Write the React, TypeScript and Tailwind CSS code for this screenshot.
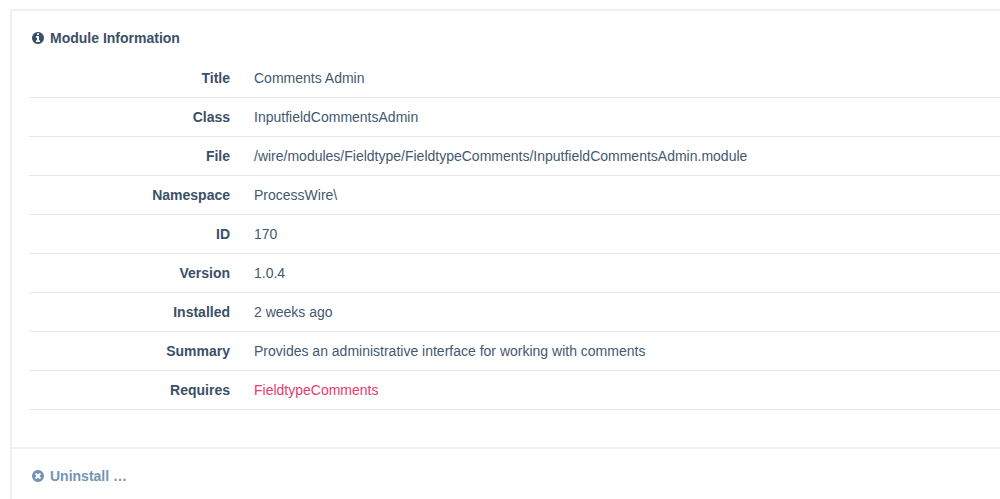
import type { ReactNode } from "react";

interface InfoRow {
  label: string;
  value: ReactNode;
}

const rows: InfoRow[] = [
  { label: "Title", value: "Comments Admin" },
  { label: "Class", value: "InputfieldCommentsAdmin" },
  {
    label: "File",
    value: "/wire/modules/Fieldtype/FieldtypeComments/InputfieldCommentsAdmin.module",
  },
  { label: "Namespace", value: "ProcessWire\\" },
  { label: "ID", value: "170" },
  { label: "Version", value: "1.0.4" },
  { label: "Installed", value: "2 weeks ago" },
  {
    label: "Summary",
    value: "Provides an administrative interface for working with comments",
  },
  {
    label: "Requires",
    value: (
      <a href="#FieldtypeComments" className="text-[#eb3a6d] hover:underline">
        FieldtypeComments
      </a>
    ),
  },
];

function InfoIcon() {
  return (
    <svg viewBox="128 128 1536 1536" fill="currentColor" className="size-3" aria-hidden="true">
      <path d="M1152 1376v-160q0-14-9-23t-23-9h-96v-512q0-14-9-23t-23-9h-320q-14 0-23 9t-9 23v160q0 14 9 23t23 9h96v320h-96q-14 0-23 9t-9 23v160q0 14 9 23t23 9h448q14 0 23-9t9-23zm-128-896v-160q0-14-9-23t-23-9h-192q-14 0-23 9t-9 23v160q0 14 9 23t23 9h192q14 0 23-9t9-23zm640 416q0 209-103 385.5t-279.5 279.5-385.5 103-385.5-103-279.5-279.5-103-385.5 103-385.5 279.5-279.5 385.5-103 385.5 103 279.5 279.5 103 385.5z" />
    </svg>
  );
}

function TimesIcon() {
  return (
    <svg viewBox="128 128 1536 1536" fill="currentColor" className="size-3" aria-hidden="true">
      <path d="M1277 1122q0-26-19-45l-181-181 181-181q19-19 19-45 0-27-19-46l-90-90q-19-19-46-19-26 0-45 19l-181 181-181-181q-19-19-45-19-27 0-46 19l-90 90q-19 19-19 46 0 26 19 45l181 181-181 181q-19 19-19 45 0 27 19 46l90 90q19 19 46 19 26 0 45-19l181-181 181 181q19 19 45 19 27 0 46-19l90-90q19-19 19-46zm387-226q0 209-103 385.5t-279.5 279.5-385.5 103-385.5-103-279.5-279.5-103-385.5 103-385.5 279.5-279.5 385.5-103 385.5 103 279.5 279.5 103 385.5z" />
    </svg>
  );
}

function InfoTable() {
  return (
    <table className="w-full border-collapse">
      <tbody>
        {rows.map((row) => (
          <tr key={row.label} className="border-b border-[#e7e7e7]">
            <th scope="row" className="w-[213px] py-2 pr-3 text-right font-bold">
              {row.label}
            </th>
            <td className="py-2 pl-3 text-[#435970]">{row.value}</td>
          </tr>
        ))}
      </tbody>
    </table>
  );
}

export default function App() {
  return (
    <main className="min-h-screen overflow-hidden bg-white pt-[9px] pl-[10px] font-['Liberation_Sans',Arial,sans-serif] text-sm leading-[22px] text-[#3a5067]">
      {/* Module information */}
      <section className="border-t-2 border-l-2 border-[#edf0f5] pt-4 pb-[37px] pl-[17px]">
        <h2 className="mb-[10px] flex items-center gap-1.5 pl-[3px] font-bold">
          <InfoIcon />
          Module Information
        </h2>
        <InfoTable />
      </section>

      {/* Uninstall */}
      <section className="border-t-2 border-l-2 border-[#edf0f5] py-4 pl-5">
        <button
          type="button"
          className="flex cursor-pointer items-center gap-1.5 font-bold text-[#7394b5]"
        >
          <TimesIcon />
          Uninstall …
        </button>
      </section>
    </main>
  );
}
